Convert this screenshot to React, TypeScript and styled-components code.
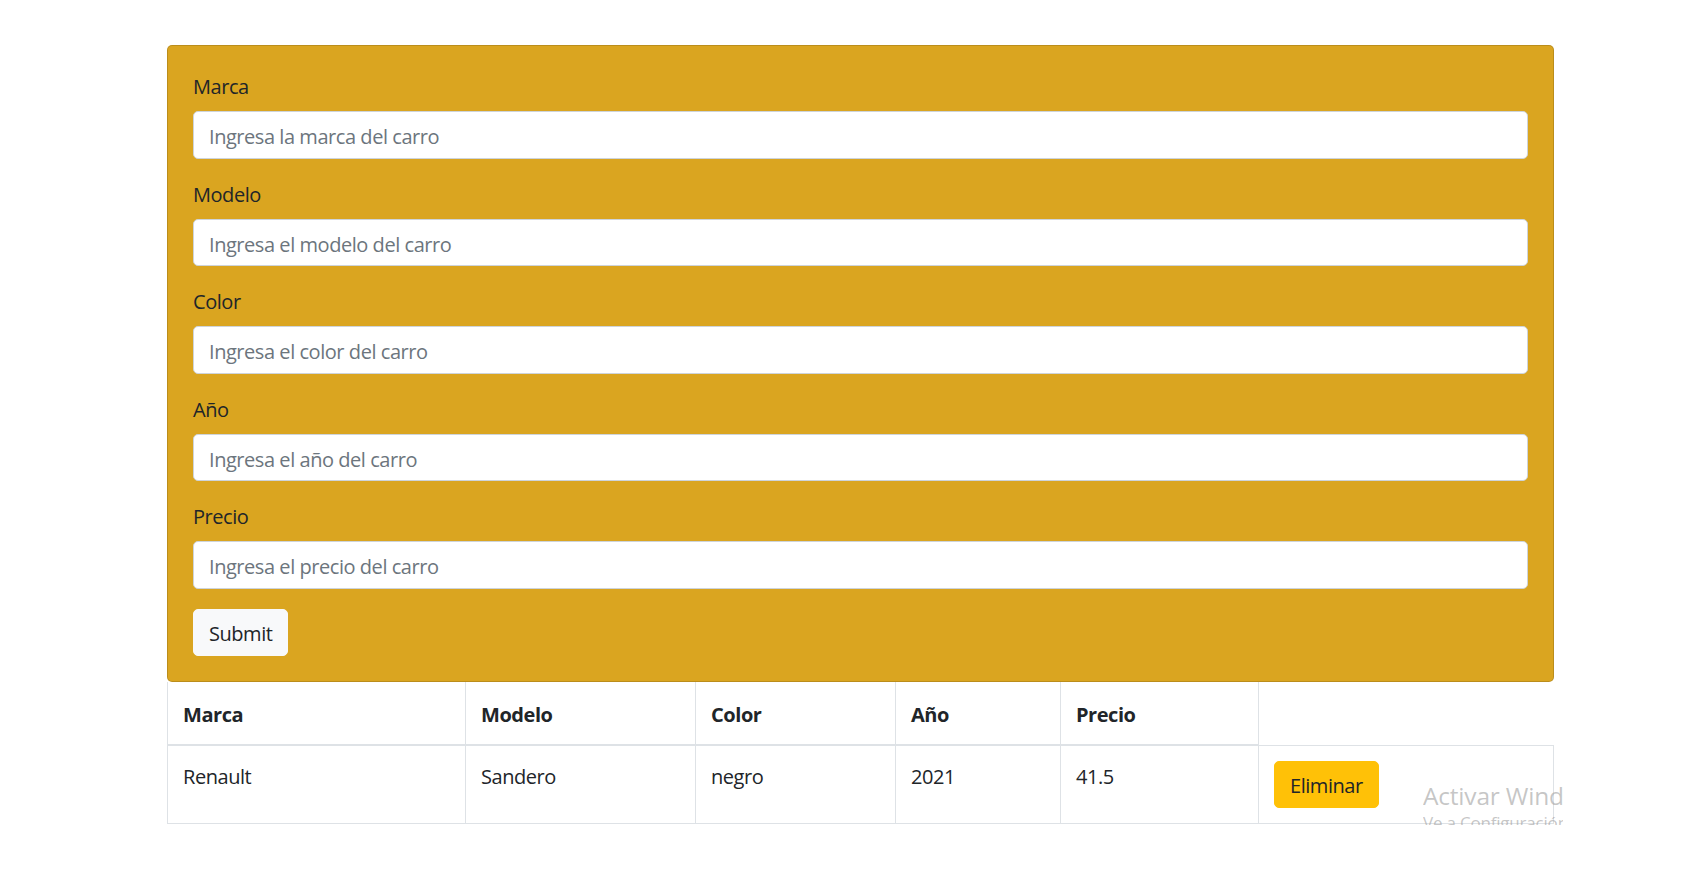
import React from "react";
import styled, { createGlobalStyle } from "styled-components";

const GlobalStyle = createGlobalStyle`
  html, body {
    margin: 0;
    padding: 0;
    background: #ffffff;
  }
  body {
    font-family: "Segoe UI", "Open Sans", "Noto Sans", sans-serif;
    font-size: 20px;
    line-height: 1.5;
    color: #212529;
    letter-spacing: -0.45px;
  }
  * { box-sizing: border-box; }
`;

const Page = styled.div`
  position: relative;
  width: 1688px;
  height: 884px;
  overflow: hidden;
  padding: 45px 0 0 167px;
`;

const Container = styled.div`
  width: 1387px;
`;

const Card = styled.form`
  background: #daa520;
  border: 1.25px solid rgba(0, 0, 0, 0.14);
  border-radius: 5px;
  padding: 25px;
`;

const FormGroup = styled.div`
  margin-bottom: 20px;
`;

const Label = styled.label`
  display: block;
  font-size: 20px;
  line-height: 30px;
  padding-top: 1px;
  margin-bottom: 9px;
  color: #212529;
`;

const Input = styled.input`
  display: block;
  width: 100%;
  height: 47.5px;
  padding: 9.5px 15px 5.5px;
  font-family: inherit;
  font-size: 20px;
  line-height: 30px;
  letter-spacing: -0.45px;
  color: #495057;
  background: #ffffff;
  border: 1.25px solid #ced4da;
  border-radius: 5px;
  outline: none;

  &::placeholder {
    color: #6c757d;
    opacity: 1;
  }
`;

const Button = styled.button<{ $variant: "light" | "warning" }>`
  display: inline-block;
  height: 47.5px;
  padding: 9.5px 15px 5.5px;
  font-family: inherit;
  font-size: 20px;
  line-height: 30px;
  letter-spacing: -0.45px;
  color: #212529;
  background: ${(p) => (p.$variant === "light" ? "#f8f9fa" : "#ffc107")};
  border: 1.25px solid ${(p) => (p.$variant === "light" ? "#f8f9fa" : "#ffc107")};
  border-radius: 5px;
  cursor: pointer;
`;

const Table = styled.table`
  width: 1387px;
  border-collapse: collapse;
  table-layout: fixed;
  color: #212529;
`;

const Th = styled.th<{ $w: number }>`
  width: ${(p) => p.$w}px;
  text-align: left;
  font-weight: 700;
  padding: 18px 15px 14px;
  line-height: 30px;
  vertical-align: bottom;
  border: 1px solid #dee2e6;
  border-top: none;
  border-bottom: 2.5px solid #dee2e6;
`;

const Td = styled.td`
  padding: 16px 15px 15px;
  line-height: 30px;
  vertical-align: top;
  border: 1px solid #dee2e6;
`;

const ActionTd = styled(Td)`
  padding-top: 15px;
`;

const Watermark = styled.div`
  position: absolute;
  left: 1423px;
  top: 780px;
  width: 140px;
  height: 45px;
  overflow: hidden;
  pointer-events: none;
  color: rgba(160, 160, 160, 0.6);
`;

const WatermarkTitle = styled.div`
  font-size: 24.5px;
  line-height: 32px;
  letter-spacing: -0.2px;
  white-space: nowrap;
`;

const WatermarkSub = styled.div`
  font-size: 17px;
  line-height: 22px;
  letter-spacing: -0.2px;
  white-space: nowrap;
`;

const fields = [
  { label: "Marca", placeholder: "Ingresa la marca del carro" },
  { label: "Modelo", placeholder: "Ingresa el modelo del carro" },
  { label: "Color", placeholder: "Ingresa el color del carro" },
  { label: "Año", placeholder: "Ingresa el año del carro" },
  { label: "Precio", placeholder: "Ingresa el precio del carro" },
];

const columns = [
  { name: "Marca", w: 298 },
  { name: "Modelo", w: 230 },
  { name: "Color", w: 200 },
  { name: "Año", w: 165 },
  { name: "Precio", w: 198 },
];

const rows = [{ marca: "Renault", modelo: "Sandero", color: "negro", anio: "2021", precio: "41.5" }];

export default function App() {
  return (
    <>
      <GlobalStyle />
      <Page>
        <Container>
          <Card onSubmit={(e) => e.preventDefault()}>
            {fields.map((f) => (
              <FormGroup key={f.label}>
                <Label>{f.label}</Label>
                <Input type="text" placeholder={f.placeholder} />
              </FormGroup>
            ))}
            <Button $variant="light" type="submit">
              Submit
            </Button>
          </Card>
          <Table>
            <thead>
              <tr>
                {columns.map((c) => (
                  <Th key={c.name} $w={c.w}>
                    {c.name}
                  </Th>
                ))}
              </tr>
            </thead>
            <tbody>
              {rows.map((r) => (
                <tr key={r.marca}>
                  <Td>{r.marca}</Td>
                  <Td>{r.modelo}</Td>
                  <Td>{r.color}</Td>
                  <Td>{r.anio}</Td>
                  <Td>{r.precio}</Td>
                  <ActionTd>
                    <Button $variant="warning" type="button">
                      Eliminar
                    </Button>
                  </ActionTd>
                </tr>
              ))}
            </tbody>
          </Table>
        </Container>
        <Watermark>
          <WatermarkTitle>Activar Windows</WatermarkTitle>
          <WatermarkSub>Ve a Configuración para activar Windows.</WatermarkSub>
        </Watermark>
      </Page>
    </>
  );
}
